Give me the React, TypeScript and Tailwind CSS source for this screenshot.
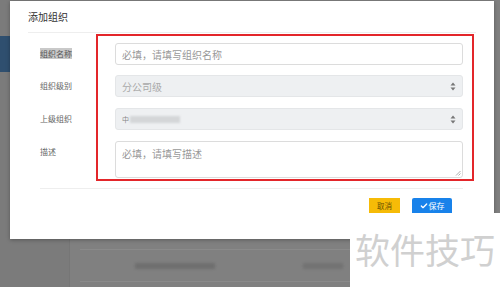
import { Check } from "lucide-react";

const font = { fontFamily: '"Noto Sans CJK SC", "Noto Sans", sans-serif' };

function Arrows() {
  return (
    <svg width="6" height="9" viewBox="0 0 6 9" className="text-[#777]">
      <path d="M3 0.5 L5.5 3.5 H0.5 Z" fill="currentColor" />
      <path d="M3 8.5 L5.5 5.5 H0.5 Z" fill="currentColor" />
    </svg>
  );
}

function Row({ label, highlight, className, children }: { label: string; highlight?: boolean; className?: string; children: React.ReactNode }) {
  return (
    <div className={"flex items-start " + (className ?? "")}>
      <div className="w-[75px] shrink-0 pt-[5px] text-[8px] leading-[12px] text-[#666]">
        <span className={highlight ? "bg-[#c9c9c9] text-[#555]" : ""}>{label}</span>
      </div>
      <div className="flex-1">{children}</div>
    </div>
  );
}

export default function App() {
  return (
    <div className="relative w-[500px] h-[287px] overflow-hidden bg-[#808080]" style={font}>
      {/* page behind the dimmed backdrop */}
      <div className="flex h-full">
        <div className="w-[70px] shrink-0 border-r border-[#767676] bg-[#7b7b7b] pt-[36px]">
          <div className="h-[36px] bg-[#2f4f6f]" />
        </div>
        <div className="flex-1 pt-[249px] px-[10px]">
          <div className="border-t border-[#8a8a8a] h-[32px] flex items-center">
            <div className="ml-[55px] h-[6px] w-[80px] bg-[#6e6e6e] blur-[1.5px]" />
            <div className="ml-[88px] h-[6px] w-[40px] bg-[#727272] blur-[1.5px]" />
          </div>
          <div className="border-t border-[#8a8a8a]" />
        </div>
      </div>

      {/* modal */}
      <div className="absolute left-[10px] top-[1px] w-[484px] h-[238px] bg-white shadow-[0_1px_4px_rgba(0,0,0,0.3)]">
        <div className="mx-[18px] h-[32px] flex items-center border-b border-[#eeeeee] text-[10px] text-[#333]">
          添加组织
        </div>
        <div className="pl-[30px] pr-[31px] pt-[10px] flex flex-col gap-[10px]">
          <Row label="组织名称" highlight>
            <div className="h-[22px] rounded-[3px] border border-[#dcdcdc] flex items-center px-[6px] text-[10px] text-[#999]">
              必填，请填写组织名称
            </div>
          </Row>
          <Row label="组织级别">
            <div className="h-[22px] rounded-[3px] border border-[#e4e6e8] bg-[#eef0f2] flex items-center justify-between px-[6px] text-[10px] text-[#aaa]">
              <span>分公司级</span>
              <Arrows />
            </div>
          </Row>
          <Row label="上级组织" className="mt-[1px]">
            <div className="h-[22px] rounded-[3px] border border-[#e4e6e8] bg-[#eef0f2] flex items-center justify-between px-[6px] text-[10px] text-[#999]">
              <span className="flex items-center gap-[1px]">
                <span className="text-[7px] text-[#888]">中</span>
                <span className="h-[7px] w-[50px] bg-[#d4d6d8] blur-[1px]" />
              </span>
              <Arrows />
            </div>
          </Row>
          <Row label="描述" className="mt-[1px]">
            <div className="relative h-[37px] rounded-[3px] border border-[#dcdcdc] px-[6px] pt-[5px] text-[10px] leading-[14px] text-[#999]">
              必填，请填写描述
              <svg className="absolute right-[1px] bottom-[1px]" width="6" height="6" viewBox="0 0 6 6">
                <path d="M5.5 1 L1 5.5 M5.5 3.5 L3.5 5.5" stroke="#999" strokeWidth="0.8" />
              </svg>
            </div>
          </Row>
        </div>
        <div className="ml-[30px] mr-[31px] mt-[10px] border-t border-[#eeeeee]" />
        <div className="flex justify-end gap-[12px] pr-[42px] pt-[9px]">
          <button className="h-[15px] w-[31px] bg-[#f6bb07] text-[7.5px] text-[#6b4f00] flex items-center justify-center">
            取消
          </button>
          <button className="h-[15px] w-[40px] bg-[#1882ea] rounded-t-[2px] text-[8px] text-white flex items-center justify-center gap-[1px]">
            <Check size={8} strokeWidth={4} />
            保存
          </button>
        </div>
      </div>

      {/* annotation frame */}
      <div className="absolute left-[96px] top-[34px] w-[378px] h-[147px] border-2 border-[#e3262a]" />

      {/* watermark */}
      <div className="absolute left-[350px] top-[213px] right-0 bottom-0 bg-white flex items-start justify-center pt-[16px]">
        <span className="text-[35px] leading-[40px] text-[#d0d0d0]">软件技巧</span>
      </div>
    </div>
  );
}
